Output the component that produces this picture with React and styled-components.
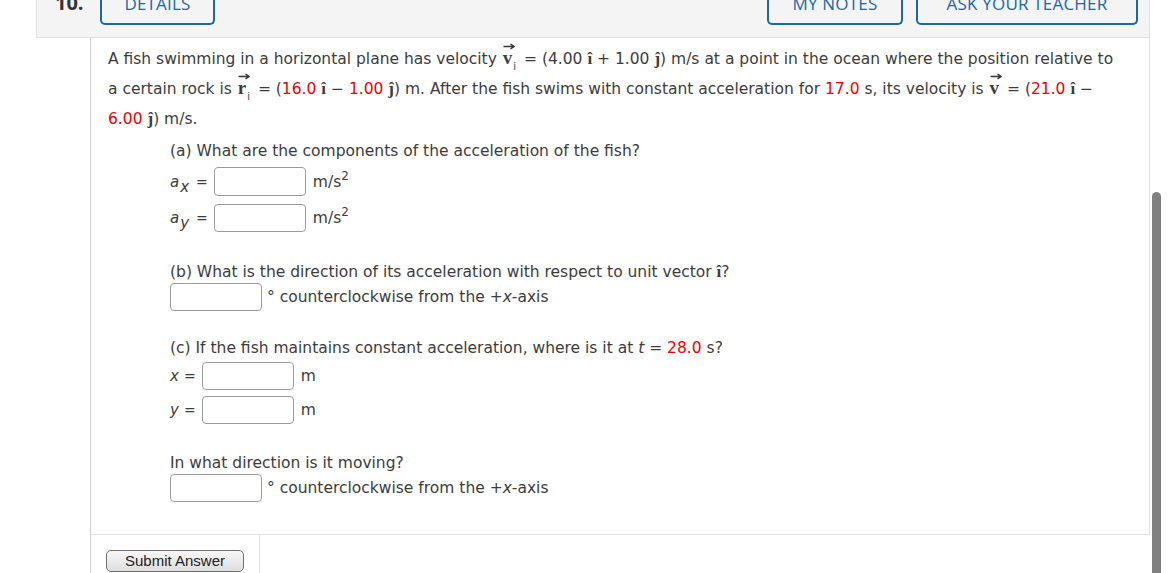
import React from "react"
import styled, { createGlobalStyle } from "styled-components"

const GlobalStyle = createGlobalStyle`
  html, body {
    margin: 0;
    padding: 0;
    background: #fff;
    overflow: hidden;
  }
  body {
    font-family: "DejaVu Sans", Verdana, sans-serif;
    color: #3c3c3c;
  }
`

const Page = styled.div`
  display: flex;
  height: 573px;
  overflow: hidden;
`

const Main = styled.div`
  flex: 0 0 1114px;
  margin-left: 36px;
  margin-top: -14px;
  display: flex;
  flex-direction: column;
`

const Header = styled.div`
  height: 51px;
  background: #f4f4f4;
  border: 1px solid #e2e2e2;
  border-top: none;
  display: flex;
  align-items: flex-start;
  padding: 0 11px 0 18px;
  font-family: "Open Sans", sans-serif;
`

const Number = styled.div`
  font-size: 20px;
  font-weight: 700;
  color: #333;
  width: 45px;
  line-height: 1;
  padding-top: 7px;
`

const TabButton = styled.div`
  width: ${p => p.$w}px;
  height: 39px;
  box-sizing: border-box;
  border: 2px solid #1a68a4;
  border-top: none;
  border-radius: 0 0 5px 5px;
  color: #1a68a4;
  font-size: 17px;
  line-height: 1;
  padding-top: 9px;
  text-align: center;
  margin-left: ${p => p.$ml || 0}px;
  letter-spacing: 0.2px;
`

const Spacer = styled.div`
  flex: 1;
`

const Body = styled.div`
  margin-left: 54px;
  border-left: 1px solid #cfcfcf;
  flex: 1;
  display: flex;
  flex-direction: column;
`

const Question = styled.div`
  border-right: 1px solid #e0e0e0;
  border-bottom: 1px solid #e0e0e0;
  padding: 6px 30px 32px 17px;
  font-size: 15.5px;
`

const Intro = styled.p`
  margin: 0;
  line-height: 30px;
`

const Red = styled.span`
  color: #ee0000;
`

const VecWrap = styled.span`
  position: relative;
  display: inline-block;
  font-family: "Liberation Serif", "Times New Roman", serif;
  font-weight: 700;
  font-size: 19px;
  line-height: 1;
  margin: 0 3px 0 1px;
`

const Arrow = styled.svg`
  position: absolute;
  left: 0;
  top: -5px;
  width: 12px;
  height: 7px;
`

const VecSub = styled.sub`
  font-family: "DejaVu Sans", sans-serif;
  font-weight: 400;
  font-size: 10px;
  vertical-align: -6px;
  margin-left: 1px;
`

const Unit = styled.span`
  font-family: "Liberation Serif", "Times New Roman", serif;
  font-weight: 700;
  font-size: 17px;
`

const Part = styled.div`
  margin-left: 62px;
  margin-top: ${p => p.$mt}px;
`

const PartText = styled.div`
  line-height: 22px;
`

const Row = styled.div`
  display: flex;
  align-items: center;
  height: ${p => p.$h || 28}px;
  margin-top: ${p => p.$mt || 0}px;
`

const Label = styled.span`
  display: inline-flex;
  align-items: baseline;
  margin-right: 6px;
  font-size: 15px;
`

const Ital = styled.i`
  font-style: italic;
`

const LabelSub = styled.span`
  font-style: italic;
  font-size: 15px;
  position: relative;
  top: 5px;
  margin-left: 1px;
  margin-right: 7px;
`

const Eq = styled.span`
  margin-left: ${p => p.$ml || 0}px;
  font-size: 14px;
`

const Input = styled.input`
  width: 92px;
  height: 100%;
  box-sizing: border-box;
  border: 1px solid #9a9a9a;
  border-radius: 4px;
  background: #fff;
  padding: 0;
  margin: 0;
`

const After = styled.span`
  margin-left: ${p => p.$ml || 7}px;
  sup {
    font-size: 12px;
    vertical-align: 7px;
    line-height: 0;
  }
`

const SubmitRow = styled.div`
  display: flex;
  flex: 1;
`

const SubmitCell = styled.div`
  width: 169px;
  border-right: 1px solid #e0e0e0;
  padding: 15px 0 0 15px;
  box-sizing: border-box;
`

const SubmitButton = styled.button`
  width: 138px;
  height: 22px;
  font-family: "Liberation Sans", Arial, sans-serif;
  font-size: 15px;
  color: #222;
  border: 1px solid #707070;
  border-radius: 5px;
  background: linear-gradient(#f7f7f7, #dedede);
  padding: 0;
  line-height: 20px;
`

const Track = styled.div`
  flex: 0 0 20px;
  padding: 192px 0 0 2px;
  box-sizing: border-box;
`

const Thumb = styled.div`
  width: 9px;
  height: 100%;
  background: #808080;
  border-radius: 5px 5px 0 0;
`

const Vec = ({ letter, sub }) => (
  <VecWrap>
    {letter}
    <Arrow viewBox="0 0 12 7">
      <path d="M0.5 3.5 H10.5 M7.5 1 L11 3.5 L7.5 6" stroke="#333" strokeWidth="1.5" fill="none" />
    </Arrow>
    {sub && <VecSub>{sub}</VecSub>}
  </VecWrap>
)

const App = () => {
  return (
    <Page>
      <GlobalStyle />
      <Main>
        <Header>
          <Number>10.</Number>
          <TabButton $w={115}>DETAILS</TabButton>
          <Spacer />
          <TabButton $w={136}>MY NOTES</TabButton>
          <TabButton $w={222} $ml={13}>ASK YOUR TEACHER</TabButton>
        </Header>
        <Body>
          <Question>
            <Intro>
              A fish swimming in a horizontal plane has velocity <Vec letter="v" sub="i" /> = (4.00 <Unit>î</Unit> + 1.00{" "}
              <Unit>ĵ</Unit>) m/s at a point in the ocean where the position relative to a certain rock is{" "}
              <Vec letter="r" sub="i" /> = (<Red>16.0</Red> <Unit>î</Unit> − <Red>1.00</Red> <Unit>ĵ</Unit>) m. After the
              fish swims with constant acceleration for <Red>17.0</Red> s, its velocity is <Vec letter="v" /> = (
              <Red>21.0</Red> <Unit>î</Unit> − <Red>6.00</Red> <Unit>ĵ</Unit>) m/s.
            </Intro>

            <Part $mt={6}>
              <PartText>(a) What are the components of the acceleration of the fish?</PartText>
              <Row $mt={5} $h={29}>
                <Label>
                  <Ital>a</Ital>
                  <LabelSub>x</LabelSub>
                  <Eq>=</Eq>
                </Label>
                <Input />
                <After>
                  m/s<sup>2</sup>
                </After>
              </Row>
              <Row $mt={8}>
                <Label>
                  <Ital>a</Ital>
                  <LabelSub>y</LabelSub>
                  <Eq>=</Eq>
                </Label>
                <Input />
                <After>
                  m/s<sup>2</sup>
                </After>
              </Row>
            </Part>

            <Part $mt={29}>
              <PartText>
                (b) What is the direction of its acceleration with respect to unit vector <Unit>î</Unit>?
              </PartText>
              <Row>
                <Input />
                <After $ml={5}>
                  ° counterclockwise from the +<Ital>x</Ital>-axis
                </After>
              </Row>
            </Part>

            <Part $mt={26}>
              <PartText>
                (c) If the fish maintains constant acceleration, where is it at <Ital>t</Ital> = <Red>28.0</Red> s?
              </PartText>
              <Row $mt={3}>
                <Label>
                  <Ital>x</Ital>
                  <Eq $ml={5}>=</Eq>
                </Label>
                <Input />
                <After>m</After>
              </Row>
              <Row $mt={6}>
                <Label>
                  <Ital>y</Ital>
                  <Eq $ml={5}>=</Eq>
                </Label>
                <Input />
                <After>m</After>
              </Row>
            </Part>

            <Part $mt={28}>
              <PartText>In what direction is it moving?</PartText>
              <Row>
                <Input />
                <After $ml={5}>
                  ° counterclockwise from the +<Ital>x</Ital>-axis
                </After>
              </Row>
            </Part>
          </Question>
          <SubmitRow>
            <SubmitCell>
              <SubmitButton>Submit Answer</SubmitButton>
            </SubmitCell>
          </SubmitRow>
        </Body>
      </Main>
      <Track>
        <Thumb />
      </Track>
    </Page>
  )
}

export default App
